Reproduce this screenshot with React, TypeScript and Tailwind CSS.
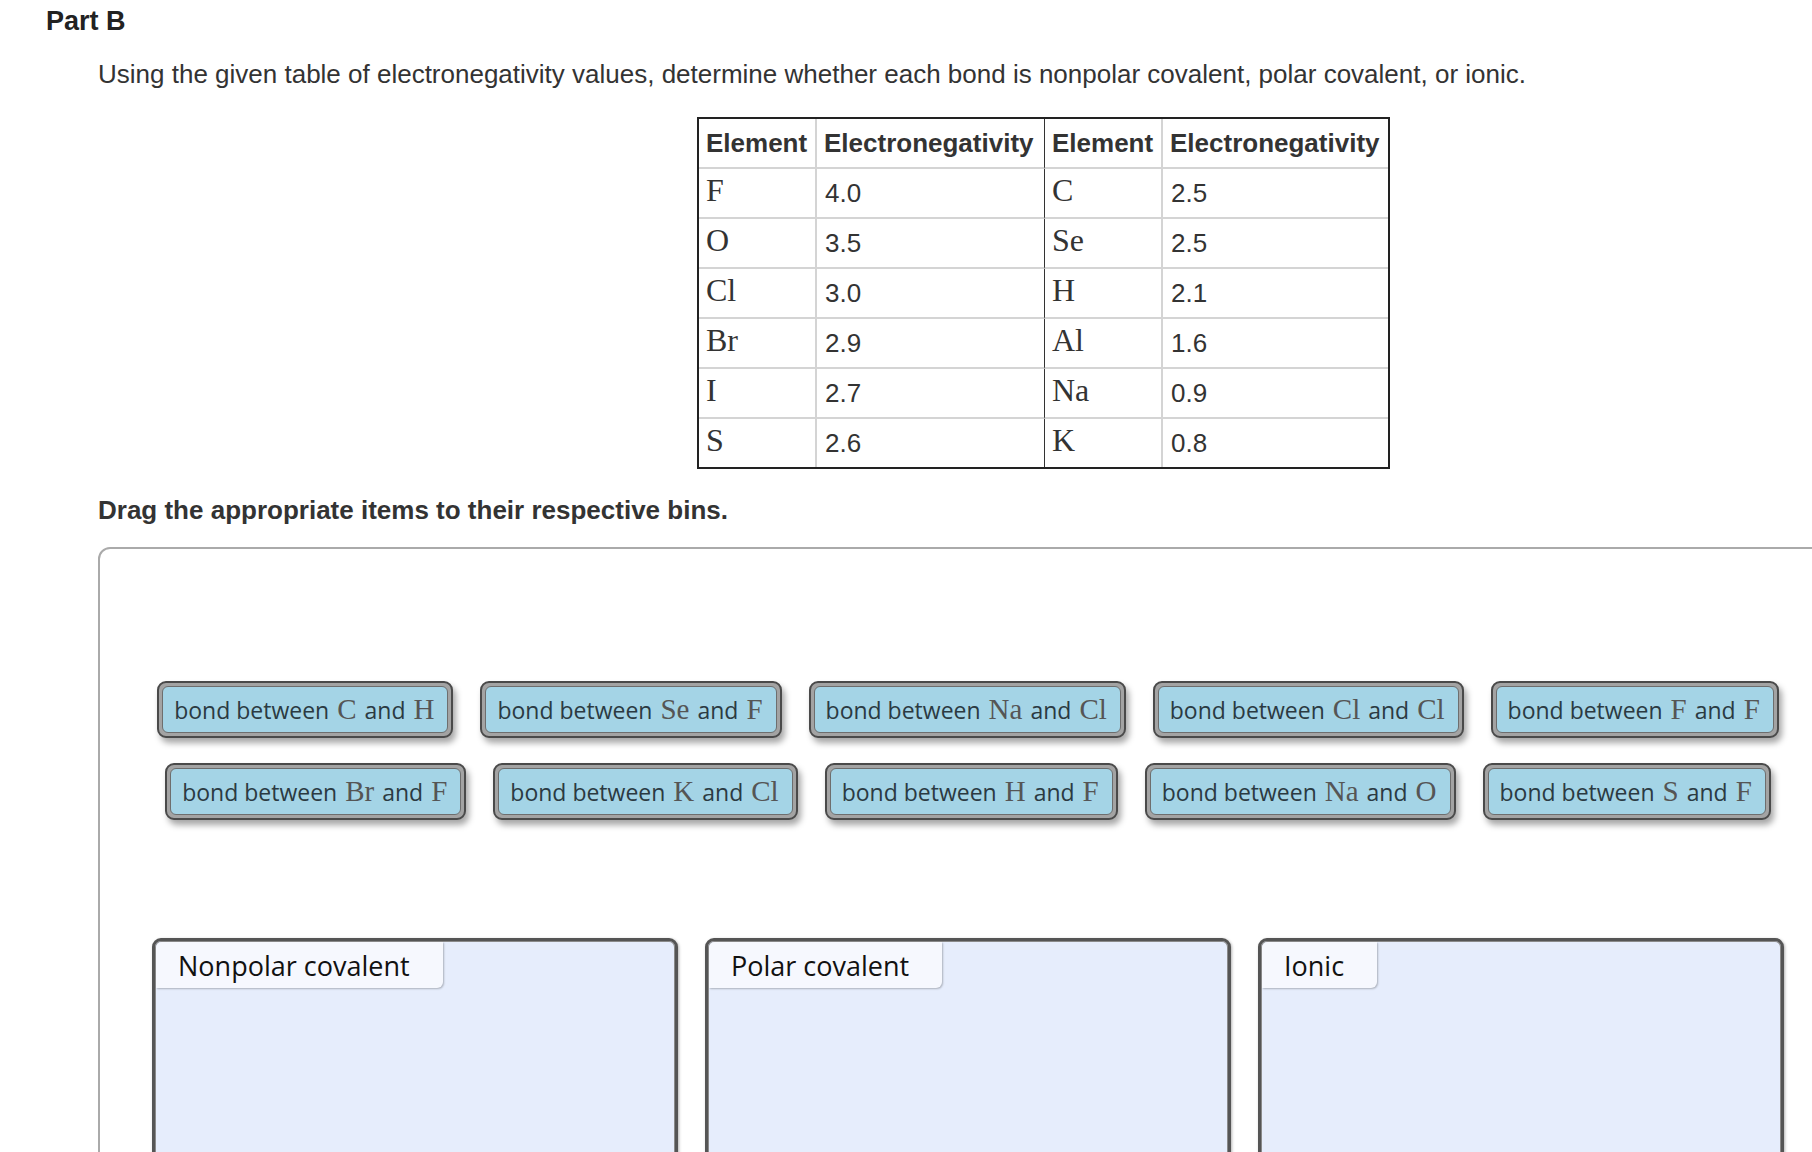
import React from "react";

const rows: [string, string, string, string][] = [
  ["F", "4.0", "C", "2.5"],
  ["O", "3.5", "Se", "2.5"],
  ["Cl", "3.0", "H", "2.1"],
  ["Br", "2.9", "Al", "1.6"],
  ["I", "2.7", "Na", "0.9"],
  ["S", "2.6", "K", "0.8"],
];

const row1: [string, string][] = [
  ["C", "H"],
  ["Se", "F"],
  ["Na", "Cl"],
  ["Cl", "Cl"],
  ["F", "F"],
];
const row2: [string, string][] = [
  ["Br", "F"],
  ["K", "Cl"],
  ["H", "F"],
  ["Na", "O"],
  ["S", "F"],
];

function Tile({ a, b }: { a: string; b: string }) {
  return (
    <div className="rounded-[9px] border-2 border-[#4a4a4a] bg-[#a3a3a3] p-[3px] shadow-[3px_5px_6px_rgba(0,0,0,0.35)]">
      <div className="h-[47px] rounded-[6px] border border-[#6e6e6e] bg-[#a4d4e6] px-[11px] flex items-center whitespace-nowrap">
        <span className="font-['Open_Sans',sans-serif] text-[23px] text-[#2b3a42] leading-none">
          bond between
          <span className="font-['Liberation_Serif',serif] text-[29px] text-[#555] mx-[8px]">{a}</span>
          and
          <span className="font-['Liberation_Serif',serif] text-[29px] text-[#555] ml-[8px] mr-[2px]">{b}</span>
        </span>
      </div>
    </div>
  );
}

function Bin({ label }: { label: string }) {
  return (
    <div className="w-[526px] h-[320px] rounded-t-[9px] border-[3px] border-[#555] bg-[#e6edfc] shadow-[inset_0_0_0_1px_#8a8a8a,1px_1px_3px_rgba(0,0,0,0.3)] flex flex-col items-start p-[1px]">
      <div className="h-[46px] pl-[22px] pr-[33px] flex items-center bg-[#f6f8fe] rounded-tl-[6px] rounded-br-[6px] shadow-[1px_1px_2px_rgba(0,0,0,0.25)] font-['Open_Sans',sans-serif] text-[27px] text-[#111] leading-none">
        {label}
      </div>
    </div>
  );
}

const serifCell =
  "font-['Liberation_Serif',serif] text-[32px] leading-none pb-[6px]";
const valCell = "text-[26px] leading-none";

export default function App() {
  return (
    <div className="w-[1812px] h-[1152px] overflow-hidden bg-white font-['Liberation_Sans',Arial,sans-serif] text-[#333]">
      <div className="pl-[46px] pt-[5px] text-[27px] font-bold leading-[32px] text-[#222]">Part B</div>
      <div className="ml-[98px] mt-[22px] text-[26px] leading-[30px] whitespace-nowrap">
        Using the given table of electronegativity values, determine whether each bond is nonpolar covalent, polar covalent, or ionic.
      </div>

      <div className="ml-[697px] mt-[28px] w-[693px] border-2 border-[#222] grid grid-cols-[118px_228px_118px_225px]">
        <div className="h-[50px] border-b-2 border-r-2 border-[#d4d4d4] flex items-center pl-[7px] font-bold text-[26px]">Element</div>
        <div className="h-[50px] border-b-2 border-[#d4d4d4] border-r border-r-[#333] flex items-center pl-[7px] font-bold text-[26px]">Electronegativity</div>
        <div className="h-[50px] border-b-2 border-r-2 border-[#d4d4d4] flex items-center pl-[7px] font-bold text-[26px]">Element</div>
        <div className="h-[50px] border-b-2 border-[#d4d4d4] flex items-center pl-[7px] font-bold text-[26px]">Electronegativity</div>
        {rows.map((r, i) => {
          const last = i === rows.length - 1;
          const bb = last ? "h-[48px]" : "h-[50px] border-b-2";
          return (
            <React.Fragment key={i}>
              <div className={`${bb} border-r-2 border-[#d4d4d4] flex items-center pl-[7px]`}>
                <span className={serifCell}>{r[0]}</span>
              </div>
              <div className={`${bb} border-[#d4d4d4] border-r border-r-[#333] flex items-center pl-[8px]`}>
                <span className={valCell}>{r[1]}</span>
              </div>
              <div className={`${bb} border-r-2 border-[#d4d4d4] flex items-center pl-[7px]`}>
                <span className={serifCell}>{r[2]}</span>
              </div>
              <div className={`${bb} border-[#d4d4d4] flex items-center pl-[8px]`}>
                <span className={valCell}>{r[3]}</span>
              </div>
            </React.Fragment>
          );
        })}
      </div>

      <div className="ml-[98px] mt-[26px] text-[26px] leading-[30px] font-bold whitespace-nowrap">
        Drag the appropriate items to their respective bins.
      </div>

      <div className="ml-[98px] mt-[22px] w-[1740px] h-[800px] border-2 border-[#aaa] rounded-tl-[12px] flex flex-col items-center pt-[132px]">
        <div className="flex gap-[27px]">
          {row1.map(([a, b], i) => (
            <Tile key={i} a={a} b={b} />
          ))}
        </div>
        <div className="flex gap-[27px] mt-[25px]">
          {row2.map(([a, b], i) => (
            <Tile key={i} a={a} b={b} />
          ))}
        </div>
        <div className="flex gap-[27px] mt-[118px]">
          <Bin label="Nonpolar covalent" />
          <Bin label="Polar covalent" />
          <Bin label="Ionic" />
        </div>
      </div>
    </div>
  );
}
